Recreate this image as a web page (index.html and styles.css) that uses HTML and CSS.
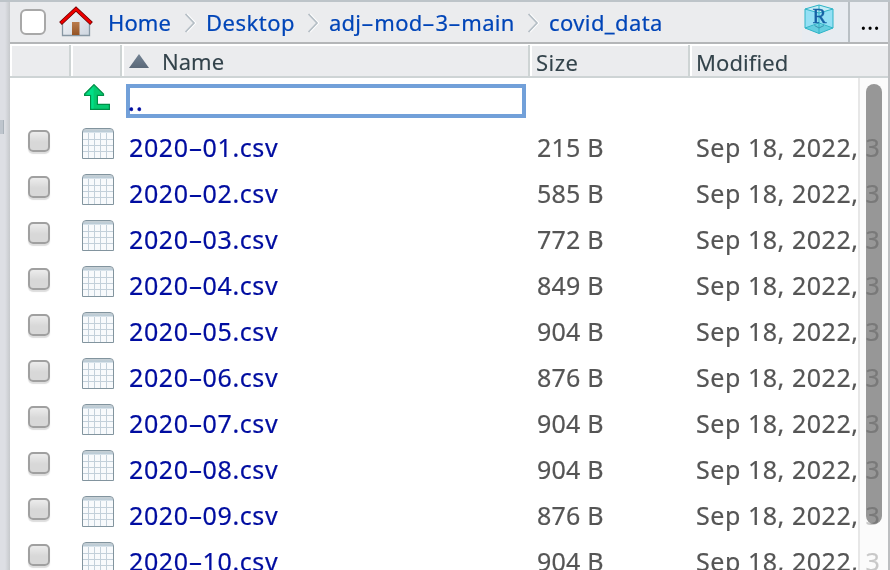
FILE: index.html
```html
<!DOCTYPE html>
<html lang="en">
<head>
<meta charset="utf-8">
<title>Files</title>
<link rel="stylesheet" href="styles.css">
</head>
<body>
<svg class="defs" aria-hidden="true">
  <defs>
    <linearGradient id="cap" x1="0" y1="0" x2="0" y2="1"><stop offset="0" stop-color="#c7d0d5"/><stop offset="1" stop-color="#b7cad7"/></linearGradient>
    <linearGradient id="wall" x1="0" y1="0" x2="1" y2="1"><stop offset="0" stop-color="#f8f9fb"/><stop offset="1" stop-color="#cdd5df"/></linearGradient>
    <linearGradient id="door" x1="0" y1="0" x2="0" y2="1"><stop offset="0" stop-color="#ba7c4e"/><stop offset="1" stop-color="#955425"/></linearGradient>
    <linearGradient id="tri" x1="0" y1="0" x2="0" y2="1"><stop offset="0" stop-color="#738394"/><stop offset="1" stop-color="#5a6878"/></linearGradient>
    <symbol id="sheet" viewBox="0 0 32 31">
      <path d="M.5 30.500V4Q.5.5 4 .5H28Q31.500.5 31.500 4V30.500Z" fill="#f8fafc"/>
      <path d="M1 4.500Q1 1 4 1H28Q31 1 31 4.500Z" fill="url(#cap)"/>
      <path d="M6.500 5V30M12.500 5V30M18.500 5V30M24.500 5V30M1 11.500H31M1 17.500H31M1 23.500H31" stroke="#c3d0da" fill="none"/>
      <path d="M.5 30.500V4Q.5.5 4 .5H28Q31.500.5 31.500 4V30.500Z" fill="none" stroke="#82949e"/>
    </symbol>
    <symbol id="sep" viewBox="0 0 13 20">
      <path d="M3 1L11.500 10L3 19" fill="none" stroke="#fff" stroke-width="1.500"/>
      <path d="M1.500 1L10 10L1.500 19" fill="none" stroke="#b5bec5" stroke-width="1.700"/>
    </symbol>
  </defs>
</svg>
<div class="window">
  <div class="gutter"><span class="grip"></span></div>
  <main class="pane">
    <nav class="toolbar">
      <span class="select-all"></span>
      <svg class="house" viewBox="0 0 34 31">
        <path d="M3.500 15L17 3L30.500 15V29.500H3.500Z" fill="url(#wall)" stroke="#8797a3" stroke-width="1.300"/>
        <path d="M13 29V16H20.500V29Z" fill="url(#door)"/>
        <path d="M1.500 17.500L17 3L32.500 17.500" fill="none" stroke="#650000" stroke-width="4"/>
        <path d="M2 17L17 3L32 17" fill="none" stroke="#ed0000" stroke-width="2.700"/>
      </svg>
      <a class="crumb home">Home</a><svg class="sep"><use href="#sep"/></svg>
      <a class="crumb desktop">Desktop</a><svg class="sep"><use href="#sep"/></svg>
      <a class="crumb module">adj<i>-</i>mod<i>-</i>3<i>-</i>main</a><svg class="sep"><use href="#sep"/></svg>
      <a class="crumb data">covid_data</a>
      <div class="project">
        <svg class="cube" viewBox="0 0 30 30">
          <path d="M15 1L29 5V24L15 29.500L1 24V5Z" fill="#94e0f5"/>
          <path d="M15 1L29 5L15 9L1 5Z" fill="#c4edf7"/>
          <path d="M15 20L29 24L15 29.500L1 24Z" fill="#64cee0"/>
          <path d="M15 1L29 5V24L15 29.500L1 24V5ZM1 5L15 9L29 5M15 1V29M1 24L15 19L29 24" fill="none" stroke="#2fb4c6"/>
          <path d="M10.500 21.500L15 24L20 21.500" fill="none" stroke="#3b94b0"/>
          <text x="15.500" y="19" text-anchor="middle" class="cube-r">R</text>
        </svg>
      </div>
      <button class="more">...</button>
    </nav>
    <div class="grid head">
      <div></div><div></div>
      <div class="sorted"><svg viewBox="0 0 20 14"><path d="M10 0L20 14H0Z" fill="url(#tri)"/></svg>Name</div>
      <div class="label size-label">Size</div><div class="label">Modified</div>
    </div>
    <div class="list">
      <div class="grid row up">
        <span></span>
        <svg class="arrow" viewBox="0 0 26 26"><path d="M10 .6L19.500 10V11.400H13.400V20.300H25.400V25.400H6.600V11.400H.6V10Z" fill="#06ca70" stroke="#008f48" stroke-width="1.200"/><path d="M10 2L2 10.700H7.300V24.600H9.600V2.500Z" fill="#00df87"/></svg>
        <a class="parent">..</a>
      </div>
      <div class="grid row"><span class="check"></span><svg class="sheet"><use href="#sheet"/></svg><a class="file">2020<i>-</i>01.csv</a><span class="size">215 B</span><span class="date">Sep 18, 2022, 3</span></div>
      <div class="grid row"><span class="check"></span><svg class="sheet"><use href="#sheet"/></svg><a class="file">2020<i>-</i>02.csv</a><span class="size">585 B</span><span class="date">Sep 18, 2022, 3</span></div>
      <div class="grid row"><span class="check"></span><svg class="sheet"><use href="#sheet"/></svg><a class="file">2020<i>-</i>03.csv</a><span class="size">772 B</span><span class="date">Sep 18, 2022, 3</span></div>
      <div class="grid row"><span class="check"></span><svg class="sheet"><use href="#sheet"/></svg><a class="file">2020<i>-</i>04.csv</a><span class="size">849 B</span><span class="date">Sep 18, 2022, 3</span></div>
      <div class="grid row"><span class="check"></span><svg class="sheet"><use href="#sheet"/></svg><a class="file">2020<i>-</i>05.csv</a><span class="size">904 B</span><span class="date">Sep 18, 2022, 3</span></div>
      <div class="grid row"><span class="check"></span><svg class="sheet"><use href="#sheet"/></svg><a class="file">2020<i>-</i>06.csv</a><span class="size">876 B</span><span class="date">Sep 18, 2022, 3</span></div>
      <div class="grid row"><span class="check"></span><svg class="sheet"><use href="#sheet"/></svg><a class="file">2020<i>-</i>07.csv</a><span class="size">904 B</span><span class="date">Sep 18, 2022, 3</span></div>
      <div class="grid row"><span class="check"></span><svg class="sheet"><use href="#sheet"/></svg><a class="file">2020<i>-</i>08.csv</a><span class="size">904 B</span><span class="date">Sep 18, 2022, 3</span></div>
      <div class="grid row"><span class="check"></span><svg class="sheet"><use href="#sheet"/></svg><a class="file">2020<i>-</i>09.csv</a><span class="size">876 B</span><span class="date">Sep 18, 2022, 3</span></div>
      <div class="grid row"><span class="check"></span><svg class="sheet"><use href="#sheet"/></svg><a class="file">2020<i>-</i>10.csv</a><span class="size">904 B</span><span class="date">Sep 18, 2022, 3</span></div>
      <div class="scrollbar"><span class="thumb"></span></div>
    </div>
  </main>
</div>
</body>
</html>
```
FILE: styles.css
```css
* { box-sizing: border-box; }
body { margin: 0; font-family: "Noto Sans", "Open Sans", sans-serif; overflow: hidden; background: #fff; }
svg { display: block; flex: none; }
.defs { position: absolute; width: 0; height: 0; }
.window { display: flex; width: 890px; height: 570px; border-top: 2px solid #bdc4c9; overflow: hidden; }
.gutter { width: 10px; flex: none; padding-top: 118px; background: linear-gradient(90deg, #dddfe4 50%, #c6c9cc); }
.grip { display: block; width: 4px; height: 14px; background: #bec5cd; border-right: 1px solid #aab3bb; }
.pane { width: 880px; flex: none; border-right: 2px solid #bdbfc1; }

.toolbar { display: flex; align-items: center; height: 42px; background: #ebecee; border-bottom: 2px solid #b4b6b8; padding-left: 10px; }
.select-all { width: 26px; height: 26px; border: 2px solid #a8a8a8; border-radius: 6px; background: #fff; margin: 0 13px 1px 0; flex: none; }
.house { width: 34px; height: 31px; margin: 0 15px 1px 0; }
.crumb { font-size: 22px; line-height: 30px; color: #0045b8; white-space: nowrap; flex: none; -webkit-text-stroke: .2px #0045b8; }
i { display: inline-block; font-style: normal; text-align: center; transform: scaleX(1.8); }
.crumb i { width: 13px; }
.home { width: 76px; letter-spacing: .1px; }
.desktop { width: 101px; letter-spacing: .5px; }
.module { width: 198px; letter-spacing: .25px; }
.data { letter-spacing: .4px; }
.sep { width: 13px; height: 20px; margin-right: 9px; margin-top: 2px; }
.project { width: 46px; height: 40px; margin-left: auto; background: #e8ecf1; padding: 2px 0 0 2px; flex: none; }
.cube { width: 30px; height: 30px; }
.cube-r { font: 21px "Liberation Serif", serif; fill: #1662a5; stroke: #1662a5; stroke-width: .4px; }
.more { width: 40px; height: 40px; flex: none; padding: 0 0 4px 2px; border: 0; border-left: 2px solid #b9c0c5; background: #ebedf1; font: 25px/30px "Noto Sans", sans-serif; color: #000; }

.grid { display: grid; grid-template-columns: 61px 51px 408px 160px 198px; }
.head { height: 34px; padding-top: 1px; border-bottom: 2px solid #ced4d5; background: #ebecee; box-shadow: inset 0 2px #fff; }
.head > div { height: 31px; border-left: 2px solid #fff; border-right: 2px solid #ced4d4; font-size: 22px; line-height: 34px; color: #33434b; padding-left: 4px; -webkit-text-stroke: .1px #33434b; }
.head > div:last-child { border-right: 0; letter-spacing: .1px; }
.head .sorted { display: flex; align-items: center; gap: 13px; padding-left: 5px; }
.sorted svg { width: 20px; height: 14px; margin-top: 1px; }
.head .size-label { letter-spacing: .5px; }

.list { position: relative; height: 492px; overflow: hidden; }
.row { height: 46px; font-size: 25px; line-height: 46px; color: #555; white-space: nowrap; }
.row i { width: 14px; }
.arrow { width: 26px; height: 26px; margin: 6px 0 0 13px; }
.parent { width: 400px; height: 34px; margin: 6px 0 0 4px; border: 4px solid #72a0d9; color: #000da0; line-height: 26px; letter-spacing: 1.200px; text-indent: -2px; -webkit-text-stroke: .5px #000da0; }
.check { width: 22px; height: 22px; margin: 6px 0 0 18px; border: 2px solid #a0a0a0; border-radius: 5px; background: linear-gradient(#ececec, #d8d8d8 55%); box-shadow: 0 2px 1px #ddd; }
.sheet { width: 32px; height: 31px; margin: 4px 0 0 11px; }
.file { padding-left: 7px; color: #000da0; letter-spacing: .6px; -webkit-text-stroke: .2px #000da0; }
.size { padding-left: 7px; letter-spacing: .2px; -webkit-text-stroke: .2px #555; }
.date { padding-left: 6px; letter-spacing: .55px; -webkit-text-stroke: .2px #555; }
.scrollbar { position: absolute; top: 0; right: 0; width: 30px; height: 100%; border-left: 2px solid #e7e7e7; background: rgba(250,250,250,.7); }
.thumb { display: block; width: 16px; height: 440px; margin: 6px 0 0 6px; border-radius: 8px; background: #9a9a9a; mix-blend-mode: multiply; }
```
